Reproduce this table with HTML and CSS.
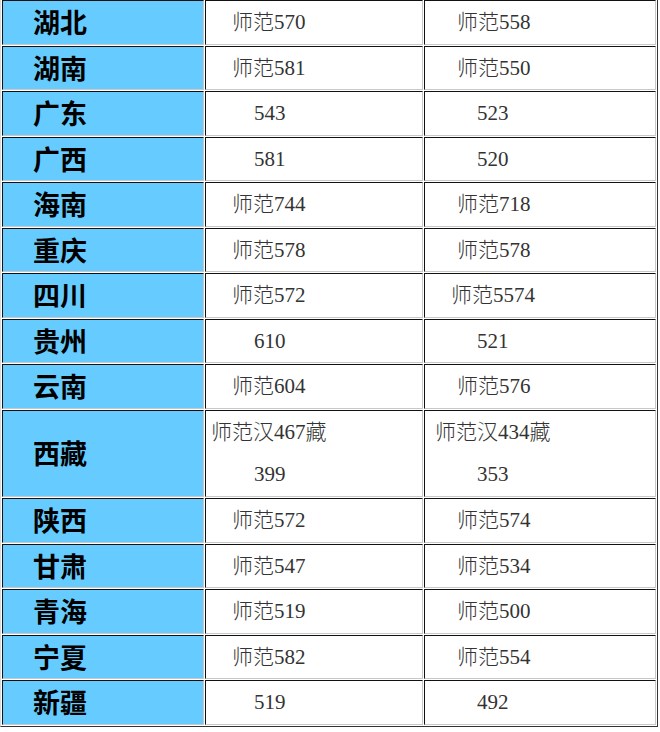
FILE: index.html
```html
<!DOCTYPE html>
<html>
<head>
<meta charset="utf-8">
<link rel="stylesheet" href="styles.css">
</head>
<body>
<table class="score">
<tr><td class="prov">湖北</td><td class="c2 s">师范570</td><td class="c3 s">师范558</td></tr>
<tr><td class="prov">湖南</td><td class="c2 s">师范581</td><td class="c3 s">师范550</td></tr>
<tr><td class="prov">广东</td><td class="c2 n">543</td><td class="c3 n">523</td></tr>
<tr><td class="prov">广西</td><td class="c2 n">581</td><td class="c3 n">520</td></tr>
<tr><td class="prov">海南</td><td class="c2 s">师范744</td><td class="c3 s">师范718</td></tr>
<tr><td class="prov">重庆</td><td class="c2 s">师范578</td><td class="c3 s">师范578</td></tr>
<tr><td class="prov">四川</td><td class="c2 s">师范572</td><td class="c3 w">师范5574</td></tr>
<tr><td class="prov">贵州</td><td class="c2 n">610</td><td class="c3 n">521</td></tr>
<tr><td class="prov">云南</td><td class="c2 s">师范604</td><td class="c3 s">师范576</td></tr>
<tr><td class="prov">西藏</td><td class="c2 x"><div>师范汉467藏</div><div class="sub">399</div></td><td class="c3 x"><div>师范汉434藏</div><div class="sub">353</div></td></tr>
<tr><td class="prov">陕西</td><td class="c2 s">师范572</td><td class="c3 s">师范574</td></tr>
<tr><td class="prov">甘肃</td><td class="c2 s">师范547</td><td class="c3 s">师范534</td></tr>
<tr><td class="prov">青海</td><td class="c2 s">师范519</td><td class="c3 s">师范500</td></tr>
<tr><td class="prov">宁夏</td><td class="c2 s">师范582</td><td class="c3 s">师范554</td></tr>
<tr><td class="prov">新疆</td><td class="c2 n">519</td><td class="c3 n">492</td></tr>
</table>
</body>
</html>
```

FILE: styles.css
```css
html, body {
  margin: 0;
  padding: 0;
  background: #ffffff;
}
.score {
  margin-top: -2px;
  border-collapse: separate;
  border-spacing: 1px;
  border: 1px solid;
  border-color: #d8d8d8 #333333 #333333 #d8d8d8;
  width: 658px;
  table-layout: fixed;
}
.score td {
  padding: 0;
  border: 1px solid;
  border-color: #111111 #c8c8c8 #c8c8c8 #111111;
  line-height: 42.55px;
  vertical-align: middle;
  white-space: nowrap;
}
.score td.prov {
  width: 202px;
  background: #66ccff;
  color: #000000;
  font-family: "Noto Sans CJK SC", sans-serif;
  font-weight: 700;
  font-size: 27px;
  padding-left: 30px;
  box-sizing: border-box;
}
.score td.c2, .score td.c3 {
  color: #333333;
  font-family: "Liberation Serif", "Noto Sans CJK SC", serif;
  font-size: 21px;
  font-weight: 300;
  box-sizing: border-box;
}
.score td.c2 { width: 218px; }
.score td.c3 { width: 232px; }
.score td.c2.s { padding-left: 26px; }
.score td.c2.n { padding-left: 48px; }
.score td.c2.x { padding-left: 5px; }
.score td.c2.x .sub { padding-left: 43px; }
.score td.c3.s { padding-left: 32px; }
.score td.c3.w { padding-left: 26px; }
.score td.c3.n { padding-left: 52px; }
.score td.c3.x { padding-left: 10px; }
.score td.c3.x .sub { padding-left: 42px; }
```
